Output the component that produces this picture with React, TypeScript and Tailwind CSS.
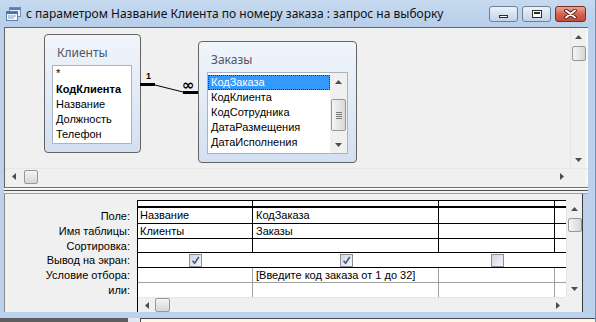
import React from 'react';

function Tri({ dir }: { dir: 'up' | 'down' | 'left' | 'right' }) {
  if (dir === 'up')
    return (
      <svg width="7" height="4" viewBox="0 0 7 4">
        <polygon points="0,4 7,4 3.5,0" fill="#4d4d4d" />
      </svg>
    );
  if (dir === 'down')
    return (
      <svg width="7" height="4" viewBox="0 0 7 4">
        <polygon points="0,0 7,0 3.5,4" fill="#4d4d4d" />
      </svg>
    );
  if (dir === 'left')
    return (
      <svg width="4" height="7" viewBox="0 0 4 7">
        <polygon points="4,0 4,7 0,3.5" fill="#4d4d4d" />
      </svg>
    );
  return (
    <svg width="4" height="7" viewBox="0 0 4 7">
      <polygon points="0,0 0,7 4,3.5" fill="#4d4d4d" />
    </svg>
  );
}

function TitleIcon() {
  return (
    <svg width="15" height="14" viewBox="0 0 15 14">
      <rect x="3.5" y="0.5" width="11" height="9" fill="#eef3fa" stroke="#6b8cc0" />
      <rect x="4" y="1" width="10" height="2" fill="#4f7fcc" />
      <rect x="0.5" y="4.5" width="11" height="9" fill="#f7f9fc" stroke="#5b7db5" />
      <rect x="1" y="5" width="10" height="2" fill="#3f6fbf" />
      <line x1="2" y1="9" x2="10" y2="9" stroke="#8a9bb5" />
      <line x1="2" y1="11" x2="8" y2="11" stroke="#8a9bb5" />
    </svg>
  );
}

function Check({ checked }: { checked: boolean }) {
  return (
    <div className="flex h-[13px] w-[13px] items-center justify-center border border-[#8e8f8f] bg-gradient-to-br from-[#cfd6e2] to-[#f6f7fa]">
      {checked && (
        <svg width="9" height="9" viewBox="0 0 9 9">
          <path d="M1.5 4.8 L3.6 7.2 L7.8 1" stroke="#3f5b93" strokeWidth="1.6" fill="none" />
        </svg>
      )}
    </div>
  );
}

export default function App() {
  const cell = 'flex items-center overflow-hidden whitespace-nowrap';
  return (
    <div className="flex h-[322px] w-[596px] flex-col overflow-hidden border-r border-[#6f8fb6] bg-[#bcd2ec] font-['Liberation_Sans',Arial,sans-serif] text-[11px] text-black">
      {/* Title bar */}
      <div className="flex h-[27px] shrink-0 items-start bg-gradient-to-b from-[#c6d9ef] to-[#b8cee8]">
        <div className="ml-[6px] mt-[7px] flex">
          <TitleIcon />
        </div>
        <div className="ml-[5px] mt-[5px] whitespace-nowrap font-['Noto_Sans',sans-serif] text-[12px] leading-[17px] text-[#111]">
          с параметром Название Клиента по номеру заказа : запрос на выборку
        </div>
        <div className="flex-1" />
        <div className="mr-[9px] mt-[6px] flex gap-[4px]">
          <div className="flex h-[16px] w-[29px] items-end justify-center rounded-[3px] border border-[#6e7f99] bg-gradient-to-b from-[#edf3fa] to-[#c2d3e9] pb-[3px]">
            <div className="h-[3px] w-[9px] border border-[#2b2b2b] bg-white" />
          </div>
          <div className="flex h-[16px] w-[29px] items-center justify-center rounded-[3px] border border-[#6e7f99] bg-gradient-to-b from-[#edf3fa] to-[#c2d3e9]">
            <div className="h-[8px] w-[10px] border border-[#2b2b2b] bg-white p-[1px]">
              <div className="h-full w-full border-t-2 border-[#2b2b2b]" />
            </div>
          </div>
          <div className="flex h-[16px] w-[31px] items-center justify-center rounded-[3px] border border-[#7b2b24] bg-gradient-to-b from-[#e8a796] via-[#d2644f] to-[#c4493a]">
            <svg width="13" height="10" viewBox="0 0 13 10">
              <path d="M2 1.5 L11 8.5 M11 1.5 L2 8.5" stroke="#4a1a16" strokeWidth="3.6" strokeLinecap="round" />
              <path d="M2 1.5 L11 8.5 M11 1.5 L2 8.5" stroke="#ffffff" strokeWidth="2" strokeLinecap="round" />
            </svg>
          </div>
        </div>
      </div>

      {/* Body */}
      <div className="flex flex-col pl-[4px]">
        {/* Upper pane */}
        <div className="flex h-[157px] w-[584px] flex-col border-l border-t border-[#646464] bg-[#f0f0f0]">
          <div className="flex h-[140px]">
            <div className="relative h-[140px] w-[565px]">
              {/* Клиенты */}
              <div className="absolute left-[39px] top-[6px] flex h-[119px] w-[97px] flex-col rounded-[4px] border border-[#646464] bg-gradient-to-b from-[#f1f5fb] to-[#d3e0f1]">
                <div className="h-[30px] pl-[12px] pt-[11px] font-['Noto_Sans',sans-serif] text-[12px] leading-[14px] text-[#4f5864]">
                  Клиенты
                </div>
                <div className="ml-[7px] h-[79px] w-[80px] border border-[#a9b3c2] bg-white pl-[3px] pt-[1px]">
                  <div className="h-[15px] leading-[13px]">*</div>
                  <div className="h-[15px] font-bold leading-[15px]">КодКлиента</div>
                  <div className="h-[15px] leading-[15px]">Название</div>
                  <div className="h-[15px] leading-[15px]">Должность</div>
                  <div className="h-[15px] leading-[15px]">Телефон</div>
                </div>
              </div>

              {/* Заказы */}
              <div className="absolute left-[193px] top-[13px] flex h-[122px] w-[159px] flex-col rounded-[4px] border border-[#646464] bg-gradient-to-b from-[#f1f5fb] to-[#d3e0f1]">
                <div className="h-[30px] pl-[12px] pt-[11px] font-['Noto_Sans',sans-serif] text-[12px] leading-[14px] text-[#4f5864]">
                  Заказы
                </div>
                <div className="ml-[8px] flex h-[82px] w-[141px] border border-[#a9b3c2] bg-white">
                  <div className="w-[122px] pt-[2px]">
                    <div className="h-[15px] border border-dotted border-[#0a3d7a] bg-[#3399ff] pl-[2px] leading-[13px] text-white">
                      КодЗаказа
                    </div>
                    <div className="h-[15px] pl-[3px] leading-[15px]">КодКлиента</div>
                    <div className="h-[15px] pl-[3px] leading-[15px]">КодСотрудника</div>
                    <div className="h-[15px] pl-[3px] leading-[15px]">ДатаРазмещения</div>
                    <div className="h-[15px] pl-[3px] leading-[15px]">ДатаИсполнения</div>
                  </div>
                  <div className="flex w-[17px] flex-col items-center bg-[#f0f0f0]">
                    <div className="flex h-[17px] w-full items-center justify-center">
                      <Tri dir="up" />
                    </div>
                    <div className="mt-[9px] flex h-[32px] w-[15px] flex-col items-center justify-center gap-[1px] rounded-[2px] border border-[#979797] bg-gradient-to-r from-[#f5f5f5] to-[#d8d8d8]">
                      <div className="h-[1px] w-[6px] bg-[#7a7a7a]" />
                      <div className="h-[1px] w-[6px] bg-[#7a7a7a]" />
                      <div className="h-[1px] w-[6px] bg-[#7a7a7a]" />
                      <div className="h-[1px] w-[6px] bg-[#7a7a7a]" />
                    </div>
                    <div className="flex-1" />
                    <div className="flex h-[17px] w-full items-center justify-center">
                      <Tri dir="down" />
                    </div>
                  </div>
                </div>
              </div>

              {/* Relationship */}
              <svg className="absolute left-0 top-0" width="565" height="140">
                <line x1="135" y1="56.5" x2="150" y2="56.5" stroke="#000" strokeWidth="3" />
                <line x1="150" y1="57" x2="178" y2="64" stroke="#000" strokeWidth="1" />
                <line x1="178" y1="64.5" x2="193" y2="64.5" stroke="#000" strokeWidth="3" />
                <text x="141" y="51" fontSize="9" fontWeight="bold" fontFamily="Liberation Sans, Arial, sans-serif">
                  1
                </text>
                <text x="177" y="62" fontSize="15" fontWeight="bold" fontFamily="DejaVu Sans, sans-serif">
                  ∞
                </text>
              </svg>
            </div>
            {/* vertical scroll */}
            <div className="flex w-[16px] flex-col items-center border-l border-[#e6e6e6] bg-[#f0f0f0]">
              <div className="flex h-[17px] w-full items-center justify-center">
                <Tri dir="up" />
              </div>
              <div className="mt-[1px] h-[15px] w-[14px] rounded-[2px] border border-[#979797] bg-gradient-to-r from-[#f5f5f5] to-[#d6d6d6]" />
              <div className="flex-1" />
              <div className="flex h-[17px] w-full items-center justify-center">
                <Tri dir="down" />
              </div>
            </div>
            <div className="w-[2px] bg-[#f7f7f7]" />
          </div>
          {/* horizontal scroll */}
          <div className="flex h-[16px] border-t border-[#e6e6e6]">
            <div className="flex w-[565px] items-center bg-[#f0f0f0]">
              <div className="flex h-full w-[17px] items-center justify-center">
                <Tri dir="left" />
              </div>
              <div className="ml-[2px] h-[14px] w-[14px] rounded-[2px] border border-[#979797] bg-gradient-to-b from-[#f5f5f5] to-[#d6d6d6]" />
              <div className="flex-1" />
              <div className="flex h-full w-[17px] items-center justify-center">
                <Tri dir="right" />
              </div>
            </div>
            <div className="w-[16px] bg-[#f0f0f0]" />
            <div className="w-[2px] bg-[#f7f7f7]" />
          </div>
        </div>

        {/* Splitter */}
        <div className="flex w-[584px] flex-col">
          <div className="h-[3px] border-l border-[#646464] bg-[#f0f0f0]" />
          <div className="h-[1px] bg-[#6d6d6d]" />
          <div className="h-[1px] bg-white" />
          <div className="h-[1px] bg-[#f0f0f0]" />
          <div className="h-[1px] bg-[#505050]" />
          <div className="h-[2px] bg-[#f0f0f0]" />
          <div className="h-[1px] bg-[#a0a0a0]" />
        </div>

        {/* Lower pane */}
        <div className="flex h-[118px] w-[579px] border-l border-r border-l-[#8a8a8a] border-r-[#3c3c3c] bg-[#f0f0f0]">
          <div className="flex w-[132px] flex-col pr-[7px] pt-[14px] text-right">
            <div className="flex h-[16px] items-center justify-end">Поле:</div>
            <div className="flex h-[15px] items-center justify-end">Имя таблицы:</div>
            <div className="flex h-[14px] items-center justify-end">Сортировка:</div>
            <div className="flex h-[15px] items-center justify-end">Вывод на экран:</div>
            <div className="flex h-[15px] items-center justify-end">Условие отбора:</div>
            <div className="flex h-[14px] items-center justify-end">или:</div>
          </div>
          <div className="mt-[6px] flex w-[445px] flex-col border-l border-black">
            <div className="flex">
              <div className="flex w-[428px] flex-col bg-white">
                {/* header */}
                <div className="flex h-[8px] border-b-2 border-t border-black">
                  <div className="w-[115px] border-r border-black" />
                  <div className="w-[186px] border-r border-black" />
                  <div className="w-[116px] border-r border-black" />
                  <div className="w-[11px]" />
                </div>
                {/* Поле */}
                <div className="flex h-[16px] border-b border-black">
                  <div className={`w-[115px] border-r border-black pl-[2px] ${cell}`}>Название</div>
                  <div className={`w-[186px] border-r border-black pl-[3px] ${cell}`}>КодЗаказа</div>
                  <div className="w-[116px] border-r border-black" />
                  <div className="w-[11px]" />
                </div>
                {/* Имя таблицы */}
                <div className="flex h-[15px] border-b border-black">
                  <div className={`w-[115px] border-r border-black pl-[2px] ${cell}`}>Клиенты</div>
                  <div className={`w-[186px] border-r border-black pl-[3px] ${cell}`}>Заказы</div>
                  <div className="w-[116px] border-r border-black" />
                  <div className="w-[11px]" />
                </div>
                {/* Сортировка */}
                <div className="flex h-[14px] border-b border-black">
                  <div className="w-[115px] border-r border-black" />
                  <div className="w-[186px] border-r border-black" />
                  <div className="w-[116px] border-r border-black" />
                  <div className="w-[11px]" />
                </div>
                {/* Вывод на экран */}
                <div className="flex h-[15px] border-b border-black">
                  <div className="flex w-[115px] items-center justify-center">
                    <Check checked />
                  </div>
                  <div className="flex w-[186px] items-center justify-center">
                    <Check checked />
                  </div>
                  <div className="flex w-[116px] items-center justify-center">
                    <Check checked={false} />
                  </div>
                  <div className="w-[11px]" />
                </div>
                {/* Условие отбора */}
                <div className="flex h-[15px] border-b border-[#a0a0a0]">
                  <div className="w-[115px] border-r border-[#a0a0a0]" />
                  <div className={`w-[186px] border-r border-[#a0a0a0] pl-[3px] ${cell}`}>
                    [Введите код заказа от 1 до 32]
                  </div>
                  <div className="w-[116px] border-r border-[#a0a0a0]" />
                  <div className="w-[11px]" />
                </div>
                {/* или */}
                <div className="flex h-[14px]">
                  <div className="w-[115px] border-r border-[#a0a0a0]" />
                  <div className="w-[186px] border-r border-[#a0a0a0]" />
                  <div className="w-[116px] border-r border-[#a0a0a0]" />
                  <div className="w-[11px]" />
                </div>
              </div>
              {/* lower vertical scroll */}
              <div className="flex h-[97px] w-[16px] flex-col items-center border-l border-[#e6e6e6] bg-[#f0f0f0]">
                <div className="flex h-[17px] w-full items-center justify-center">
                  <Tri dir="up" />
                </div>
                <div className="mt-[1px] h-[14px] w-[14px] rounded-[2px] border border-[#979797] bg-gradient-to-r from-[#f5f5f5] to-[#d6d6d6]" />
                <div className="flex-1" />
                <div className="flex h-[17px] w-full items-center justify-center">
                  <Tri dir="down" />
                </div>
              </div>
            </div>
            {/* lower horizontal scroll */}
            <div className="flex h-[15px]">
              <div className="flex w-[428px] items-center border-t border-[#e6e6e6] bg-[#f0f0f0]">
                <div className="flex h-full w-[17px] items-center justify-center">
                  <Tri dir="left" />
                </div>
                <div className="h-[14px] w-[15px] rounded-[2px] border border-[#979797] bg-gradient-to-b from-[#f5f5f5] to-[#d6d6d6]" />
                <div className="flex-1" />
                <div className="flex h-full w-[17px] items-center justify-center">
                  <Tri dir="right" />
                </div>
              </div>
              <div className="w-[16px] bg-[#f0f0f0]" />
            </div>
          </div>
        </div>
      </div>

      {/* bottom frame */}
      <div className="h-[6px] shrink-0" />
      <div className="flex h-[4px] shrink-0">
        <div className="w-[128px] bg-[#5e5e5e]" />
        <div className="w-[12px] bg-[#dfe8f3]" />
        <div className="flex-1 border-l border-t border-[#4a4a4a] bg-[#fbf6e6]" />
      </div>
    </div>
  );
}
